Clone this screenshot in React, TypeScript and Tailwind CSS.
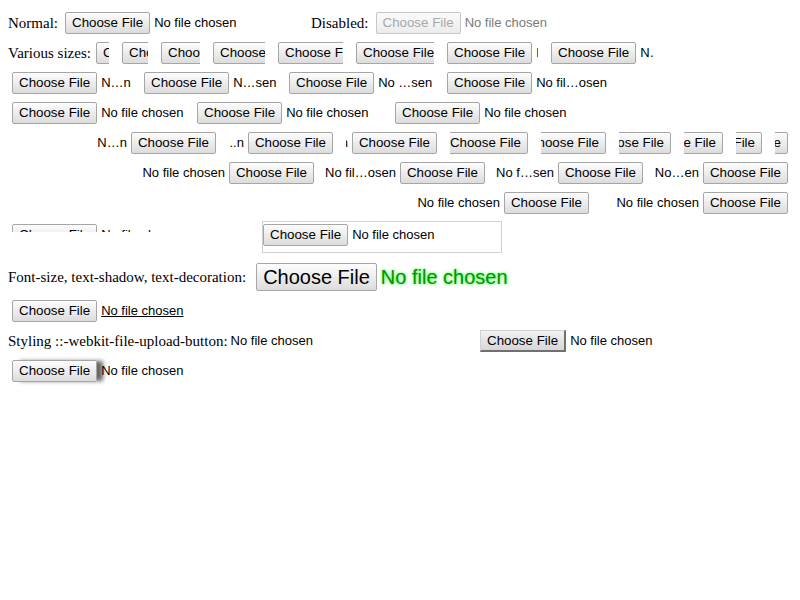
import React from 'react';

const SANS = "font-['Liberation_Sans',Arial,sans-serif]";

type BtnProps = { disabled?: boolean; className?: string };

const Btn: React.FC<BtnProps> = ({ disabled, className = '' }) => (
    <span
        className={`shrink-0 inline-flex items-center justify-center h-[22px] px-[6px] rounded-[2px] border text-[13.33px] leading-none whitespace-nowrap ${
            disabled
                ? 'border-[#c6c6c6] bg-gradient-to-b from-[#fbfbfb] to-[#ececec] text-[#a8a8a8]'
                : 'border-[#a6a6a6] bg-gradient-to-b from-[#fdfdfd] to-[#dcdcdc] text-black'
        } ${className}`}
    >
        Choose File
    </span>
);

// narrow inputs clip their button; wide ones already hold a shortened name
const FileLTR: React.FC<{ w: number; text?: string }> = ({ w, text = 'No file chosen' }) => (
    <div
        className={`shrink-0 flex items-center whitespace-nowrap ${w < 117 ? 'overflow-hidden' : 'overflow-visible'}`}
        style={{ width: w }}
    >
        <Btn />
        <span className="shrink-0 ml-[4px] text-[13px]">{text}</span>
    </div>
);

const FileRTL: React.FC<{ w: number; text?: string }> = ({ w, text = 'No file chosen' }) => (
    <div
        className={`shrink-0 flex items-center justify-end whitespace-nowrap ${w < 117 ? 'overflow-hidden' : 'overflow-visible'}`}
        style={{ width: w }}
    >
        <span className="shrink-0 mr-[4px] text-[13px]">{text}</span>
        <Btn />
    </div>
);

const ROW2 = [13, 26, 39, 52, 65, 78, 91];
const ROW3 = [
    { w: 117, t: 'N…n' },
    { w: 130, t: 'N…sen' },
    { w: 143, t: 'No …sen' },
    { w: 156, t: 'No fil…osen' },
];
const ROW5 = [
    { w: 117, t: 'N…n' },
    { w: 104, t: '..n' },
    { w: 91, t: 'n' },
    { w: 78, t: '' },
    { w: 65, t: '' },
    { w: 52, t: '' },
    { w: 39, t: '' },
    { w: 26, t: '' },
    { w: 13, t: '' },
];
const ROW6 = [
    { w: 169, t: 'No file chosen' },
    { w: 156, t: 'No fil…osen' },
    { w: 143, t: 'No f…sen' },
    { w: 130, t: 'No…en' },
];

const App: React.FC = () => {
    const label = "font-['Liberation_Serif','Times_New_Roman',serif] text-[15px] text-black whitespace-nowrap";

    return (
        <div className={`w-[800px] h-[600px] bg-white p-[8px] text-black ${SANS}`}>
            {/* normal / disabled */}
            <div className="h-[30px] flex items-center">
                <div className="w-[303px] flex items-center">
                    <span className={label}>Normal:</span>
                    <Btn className="ml-[7px]" />
                    <span className="ml-[4px] text-[13px]">No file chosen</span>
                </div>
                <span className={label}>Disabled:</span>
                <Btn disabled className="ml-[7px]" />
                <span className="ml-[4px] text-[13px] text-[#7a7a7a]">No file chosen</span>
            </div>

            {/* various sizes, ltr */}
            <div className="h-[30px] flex items-center">
                <span className={`${label} w-[88px] shrink-0`}>Various sizes:</span>
                <div className="flex items-center gap-[13px]">
                    {ROW2.map(w => (
                        <FileLTR key={w} w={w} />
                    ))}
                    <FileLTR w={104} text="N…" />
                </div>
            </div>
            <div className="h-[30px] flex items-center pl-[4px] gap-[15px]">
                {ROW3.map(r => (
                    <FileLTR key={r.w} w={r.w} text={r.t} />
                ))}
            </div>
            <div className="h-[30px] flex items-center pl-[4px] gap-[16px]">
                <FileLTR w={169} />
                <FileLTR w={182} />
                <FileLTR w={195} />
            </div>

            {/* various sizes, rtl */}
            <div className="h-[30px] flex items-center justify-end pr-[4px] gap-[13px]">
                {ROW5.map(r => (
                    <FileRTL key={r.w} w={r.w} text={r.t} />
                ))}
            </div>
            <div className="h-[30px] flex items-center justify-end pr-[4px] gap-[15px]">
                {ROW6.map(r => (
                    <FileRTL key={r.w} w={r.w} text={r.t} />
                ))}
            </div>
            <div className="h-[30px] flex items-center justify-end pr-[4px] gap-[17px]">
                <FileRTL w={195} />
                <FileRTL w={182} />
            </div>

            {/* height */}
            <div className="h-[44px] flex items-start pl-[4px]">
                <div className="mt-[6px] w-[170px] h-[8px] overflow-hidden flex items-start whitespace-nowrap">
                    <Btn />
                    <span className="ml-[4px] text-[13px] leading-[22px]">No file chosen</span>
                </div>
                <div className="ml-[80px] mt-[3px] w-[240px] h-[32px] border border-[#cfcfcf] flex items-start">
                    <div className="mt-[2px] flex items-center">
                        <Btn />
                        <span className="ml-[4px] text-[13px]">No file chosen</span>
                    </div>
                </div>
            </div>

            {/* font-size, text-shadow, text-decoration */}
            <div className="h-[30px] flex items-center">
                <span className={label}>Font-size, text-shadow, text-decoration:</span>
                <span className="ml-[10px] shrink-0 inline-flex items-center h-[28px] px-[6px] rounded-[2px] border border-[#a6a6a6] bg-gradient-to-b from-[#fdfdfd] to-[#dcdcdc] text-[20px] leading-none">
                    Choose File
                </span>
                <span className="ml-[4px] text-[20px] text-[#009400] [text-shadow:0_0_3px_#00ff00]">
                    No file chosen
                </span>
            </div>
            <div className="mt-[4px] h-[30px] flex items-center pl-[4px]">
                <Btn />
                <span className="ml-[4px] text-[13px] underline">No file chosen</span>
            </div>

            {/* styled upload button */}
            <div className="h-[30px] flex items-center">
                <div className="w-[472px] flex items-center">
                    <span className={label}>Styling ::-webkit-file-upload-button:</span>
                    <span className="ml-[3px] text-[13px]">No file chosen</span>
                </div>
                <span className="shrink-0 inline-flex items-center h-[22px] px-[6px] border-t border-l border-t-[#d0d0d0] border-l-[#d0d0d0] border-r-2 border-b-2 border-r-[#707070] border-b-[#707070] bg-gradient-to-b from-[#f2f2f2] to-[#d6d6d6] text-[13.33px] leading-none">
                    Choose File
                </span>
                <span className="ml-[4px] text-[13px]">No file chosen</span>
            </div>
            <div className="h-[30px] flex items-center pl-[4px]">
                <Btn className="relative shadow-[7px_0_4px_-1px_rgba(0,0,0,0.6)]" />
                <span className="ml-[4px] text-[13px]">No file chosen</span>
            </div>
        </div>
    );
};

export default App;
